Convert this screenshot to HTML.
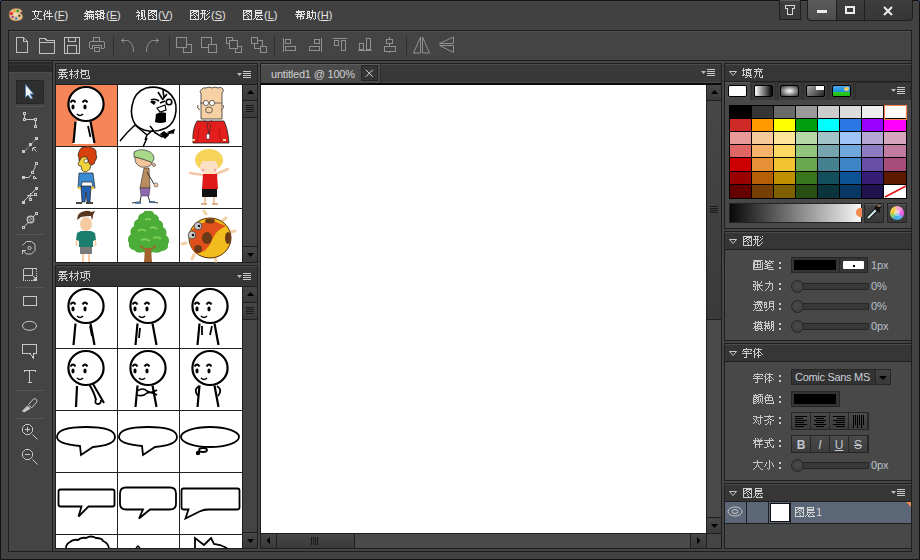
<!DOCTYPE html>
<html><head><meta charset="utf-8">
<style>
*{box-sizing:border-box}
html,body{margin:0;padding:0}
body{width:920px;height:560px;overflow:hidden;position:relative;background:#2c6cae;font-family:"Liberation Sans",sans-serif;font-size:12px;color:#d8d8d8}
.a{position:absolute}
#win{left:0;top:0;width:920px;height:560px;background:#414141;border:1px solid #121212;border-radius:2px 2px 0 0;box-shadow:inset 0 1px 0 #484848}
.menu{top:8px;font-size:11px;color:#e2e2e2;line-height:14px;white-space:nowrap}
.menu u{text-decoration:underline}
.bd{border:1px solid #1f1f1f}
.hdr{background:#363636;border-top:1px solid #4a4a4a}
.htxt{font-size:11px;color:#cfcfcf;line-height:14px;white-space:nowrap}
svg{position:absolute;overflow:visible}
.lbl{font-size:11px;color:#cdcdcd;line-height:14px;white-space:nowrap}
.val{font-size:11px;letter-spacing:-0.1px;color:#b8c0c8;line-height:14px;white-space:nowrap}
.ftab{width:25px;height:18px;background:#3c3c3c;border:1px solid #2e2e2e;border-bottom:none}
.sw{width:19px;height:12px;border:1px solid #000;border-radius:2px}
.ibtn{width:20px;height:20px;background:linear-gradient(#454545,#383838);border:1px solid #262626;box-shadow:inset 0 1px 0 #5a5a5a}
.abtn{width:18px;height:16px;background:linear-gradient(#4a4a4a,#3c3c3c)}
.sty{width:18px;text-align:center;font-size:12px;color:#c0c8d0;line-height:14px}
.sbtn{background:linear-gradient(#474747,#3a3a3a)}
</style></head><body>
<div id="win" class="a"></div>

<!-- title bar -->
<svg style="left:0;top:0" width="30" height="30">
 <path d="M9.2 15q-0.3-6 6-6.5q6-0.3 7 3.2l-2.2 1.2q2.5 0.8 2.8 3.5q0 4-6.5 4.5q-6.8 0.3-7.1-5.9z" fill="#e6c08e" stroke="#9c7040" stroke-width=".7"/>
 <circle cx="11.4" cy="13.6" r="1.5" fill="#d82020"/><circle cx="14.5" cy="11.2" r="1.1" fill="#f59a10"/><circle cx="17.8" cy="11" r="1.3" fill="#28a028"/>
 <circle cx="12.6" cy="17" r="1.2" fill="#a040a8"/><circle cx="16.2" cy="18.4" r="1.2" fill="#2090e0"/><circle cx="19.4" cy="15.8" r="1.1" fill="#3a3a3a"/>
 <circle cx="15.5" cy="14.5" r="1.8" fill="#f8dcb8"/>
</svg>
<div class="a menu" style="left:54px">(<u>F</u>)</div>
<div class="a menu" style="left:106px">(<u>E</u>)</div>
<div class="a menu" style="left:158px">(<u>V</u>)</div>
<div class="a menu" style="left:211px">(<u>S</u>)</div>
<div class="a menu" style="left:264px">(<u>L</u>)</div>
<div class="a menu" style="left:317px">(<u>H</u>)</div>

<!-- window buttons -->
<div class="a" style="left:779px;top:0;width:22px;height:20px;background:linear-gradient(#404040,#383838);border:1px solid #1e1e1e;border-top:none;box-shadow:inset 0 1px 0 #585858"></div>
<svg style="left:0;top:0" width="920" height="30" shape-rendering="crispEdges"><path d="M785.5 5.5h9v3h-2v6h-5v-6h-2z" fill="none" stroke="#d8d8d8" stroke-width="1"/></svg>
<div class="a" style="left:807px;top:0;width:106px;height:21px;background:#1e1e1e;border-radius:0 0 4px 4px"></div>
<div class="a" style="left:808px;top:0;width:28px;height:20px;background:linear-gradient(#5a5a5a,#4d4d4d);border-radius:0 0 0 3px"></div>
<div class="a" style="left:837px;top:0;width:27px;height:20px;background:linear-gradient(#3e3e3e,#363636)"></div>
<div class="a" style="left:865px;top:0;width:47px;height:20px;background:linear-gradient(#3e3e3e,#363636);border-radius:0 0 3px 0"></div>
<div class="a" style="left:817px;top:10px;width:10px;height:2.5px;background:#ececec"></div>
<div class="a" style="left:845px;top:6px;width:10px;height:8px;border:2px solid #ececec"></div>
<svg style="left:883px;top:6px" width="10" height="10"><path d="M1 1L9 9M9 1L1 9" stroke="#ececec" stroke-width="2"/></svg>

<!-- toolbar -->
<div class="a bd" style="left:8px;top:30px;width:904px;height:31px;background:#444;border-color:#1e1e1e"></div>
<div class="a" style="left:9px;top:31px;width:902px;height:1px;background:#515151"></div>
<svg id="tb" style="left:0;top:0" width="920" height="60" fill="none" stroke="#c0c0c0" stroke-width="1" shape-rendering="crispEdges">
 <!-- new -->
 <path d="M16.5 37.5h7l4 4v11h-11z M23.5 37.5v4h4"/>
 <!-- open -->
 <path d="M39.5 38.5h6l1 2h8v12.5h-15z M39.5 42.5h15"/>
 <!-- save -->
 <path d="M64.5 37.5h15v15.5h-15z M68.5 37.5v4h7v-4 M67.5 52.5v-7h9v7"/>
<g stroke="#909090"> <!-- print -->
 <g><path d="M93.5 41v-3.5h6v3.5 M90 41.5h14 M89.5 42v6 M104.5 42v6 M90 48.5h3 M101 48.5h3 M92.5 48v-2.5h9v2.5 M94.5 47.5h5v4h-5z"/></g>
 <path d="M113.5 36v19" stroke="#2e2e2e"/>
 <g shape-rendering="auto"><path d="M121.5 40.5h5c3 0 7 3 7 11.5 M121.5 40.5l2.5-2.5 M121.5 40.5l2.5 2.5"/><path d="M158.5 40.5h-5c-3 0-7 3-7 11.5 M158.5 40.5l-2.5-2.5 M158.5 40.5l-2.5 2.5"/></g>
 <path d="M169.5 36v19" stroke="#2e2e2e"/>
 <!-- arrange -->
 <path d="M183.5 44.5h8v8h-8z"/><path d="M176.5 37.5h10v10h-10z" fill="#444"/>
 <path d="M201.5 37.5h10v10h-10z"/><path d="M208.5 44.5h8v8h-8z" fill="#444"/>
 <path d="M226.5 37.5h6v6h-6z M235.5 46.5h6v6h-6z"/><path d="M229.5 40.5h8v8h-8z" fill="#444"/>
 <path d="M254.5 40.5h8v8h-8z"/><path d="M251.5 37.5h6v6h-6z M260.5 46.5h6v6h-6z" fill="#444"/>
 <path d="M274.5 36v19" stroke="#2e2e2e"/>
 <!-- align -->
 <path d="M283.5 38v14 M285.5 39.5h5v4h-5z M285.5 46.5h10v4h-10z"/>
 <path d="M321.5 38v14 M314.5 39.5h5v4h-5z M309.5 46.5h10v4h-10z"/>
 <path d="M333 38.5h14 M334.5 40.5h4v5h-4z M341.5 40.5h4v10h-4z"/>
 <path d="M358 50.5h14 M359.5 43.5h4v6h-4z M366.5 38.5h4v11h-4z"/>
 <path d="M389.5 37v2 M389.5 44v2 M389.5 51v2 M386.5 39.5h6v4h-6z M384.5 46.5h11v5h-11z"/>
 <path d="M406.5 36v19" stroke="#2e2e2e"/>
 <path d="M420.5 37v16h-7z M422.5 37v16h7z" shape-rendering="auto"/>
 <path d="M453.5 37v6.5h-14z M453.5 52.5v-7h-14z" shape-rendering="auto"/>
</g></svg>

<!-- main area -->
<div class="a bd" style="left:8px;top:60px;width:904px;height:492px;background:#454545;border-color:#1e1e1e"></div>
<!-- tools panel -->
<div class="a bd" style="left:8px;top:60px;width:45px;height:492px;background:#444"></div>
<div class="a" style="left:9px;top:61px;width:43px;height:11px;background:#2b2b2b;border-top:1px solid #474747"></div>
<div class="a" style="left:9px;top:62px;width:43px;height:1px;background:#232323"></div>
<div class="a" style="left:10px;top:64px;width:41px;height:1px;border-top:1px dotted #3c3c3c"></div>
<div class="a" style="left:9px;top:72px;width:43px;height:1px;background:#4d4d4d"></div>
<div class="a" style="left:16px;top:80px;width:28px;height:24px;background:#2f2f2f;border:1px solid #262626"></div>
<div class="a" style="left:16px;top:106px;width:28px;height:1px;background:#555"></div>
<div class="a" style="left:16px;top:234px;width:28px;height:1px;background:#555"></div>
<div class="a" style="left:16px;top:287px;width:28px;height:1px;background:#555"></div>
<div class="a" style="left:16px;top:390px;width:28px;height:1px;background:#555"></div>
<div class="a" style="left:16px;top:418px;width:28px;height:1px;background:#555"></div>
<svg id="tools" style="left:0;top:0" width="60" height="560" fill="none" stroke="#c8c8c8" stroke-width="1">
 <path d="M25.5 84.5v13l2.5-2.5 3 4 1.5-1-2.5-4h3.5z" fill="#f4f8fb" stroke="#4d7fb8" stroke-width=".9"/>
 <g shape-rendering="crispEdges">
  <path d="M23.5 112.5h2v2h-2z M23.5 118.5h2v2h-2z M34.5 118.5h2v2h-2z M34.5 125.5h2v2h-2z M24.5 115v3 M26 119.5h8 M35.5 121v4"/>
  <path d="M22 150h3v3h-3z M29 143h3v3h-3z M35 137h3v3h-3z" fill="#c8c8c8" stroke="none"/>
  <path d="M32.5 147.5h3 M32.5 147.5v3" />
  <path d="M22 176h3v3h-3z" fill="#c8c8c8" stroke="none"/>
  <path d="M31.5 171.5h2v2h-2z M35.5 162.5h2v2h-2z M33.5 178.5h3 M33.5 175.5v3"/>
    <path d="M22 201h3v3h-3z M35 187h3v3h-3z" fill="#c8c8c8" stroke="none"/>
  <path d="M34.5 193.5h2v2h-2z M29.5 198.5h2v2h-2z"/>
  <path d="M22.5 226.5h2v2h-2z M35.5 212.5h2v2h-2z"/>
  <path d="M23.5 268.5h13 M23.5 268.5v12 M23.5 275.5h9 M32.5 268.5v7"/>
  <path d="M36.5 271v5 M25 280.5h7" stroke-dasharray="1 1"/><path d="M36.5 268v2"/>
  <path d="M23.5 296.5h13v9h-13z"/>
  <path d="M22.5 344.5h14v9h-3.5v4l-3-4h-7.5z"/>
  <path d="M24 370.5h12 M24.5 371v1 M35.5 371v1 M29.5 371v11 M28 382.5h4"/>
 </g>
 <path d="M23.5 201.5l12-12" shape-rendering="auto" stroke-width="1"/>
 <path d="M24.5 151.5l11-12" shape-rendering="auto" stroke-dasharray="1.2 .8"/>
 <path d="M33 148l3.5 3.5" shape-rendering="auto"/>
 <path d="M25 177.5h4l2-2.5 M33 171l2-3v-3" shape-rendering="auto"/>
 <path d="M34 176l3 3" shape-rendering="auto"/>
 <path d="M30.5 193l-.5 5 M27 195.5h6.5" shape-rendering="auto"/>
 <path d="M24 227l12-13" shape-rendering="auto"/>
 <circle cx="30.5" cy="219.5" r="3.3" fill="#444" stroke-width="1.2"/><path d="M28 218.5l4 4 M29.5 217l3.5 3.5" stroke-width="1"/>
 <path d="M22.5 245.5l4-4h5l3.5 3v6l-3.5 3.5h-5l-4-4" shape-rendering="auto"/>
 <path d="M22.5 250v3.5 M22.5 250.5h3.5" shape-rendering="crispEdges"/>
 <circle cx="29.5" cy="248" r="1.6" stroke-width="1"/>
 <path d="M32.5 275.5l2.5 2.5" shape-rendering="auto"/><path d="M37 276v5h-5z" fill="#c8c8c8" stroke="none"/>
 <ellipse cx="29.5" cy="325.8" rx="7" ry="4.5"/>
 <path d="M28.5 404.5l5-5.5q1.5-1 3 0.5q1 1.5 0 3l-5 5.5z" shape-rendering="auto"/>
 <path d="M22.5 411l5-5 2.5 2.5-6 3.5z" fill="#c8c8c8" stroke="#c8c8c8" stroke-width="1"/>
 <path d="M25.5 424.5h4l3 3v4l-3 3h-4l-3-3v-4z M32.5 434.5l5 5 M25 429.5h5 M27.5 427v5" shape-rendering="auto"/>
 <path d="M25.5 449.5h4l3 3v4l-3 3h-4l-3-3v-4z M32.5 459.5l5 5 M25 454.5h5" shape-rendering="auto"/>
</svg>

<!-- left panel 1: 素材包 -->
<div class="a bd" style="left:55px;top:63px;width:203px;height:200px;background:#414141"></div>
<div class="a hdr" style="left:56px;top:64px;width:201px;height:20px"></div>
<div class="a" style="left:56px;top:84px;width:201px;height:1px;background:#1f1f1f"></div>
<div class="a" style="left:56px;top:85px;width:186px;height:177px;background:#ffffff"></div>

<!-- left panel 2: 素材项 -->
<div class="a bd" style="left:55px;top:265px;width:203px;height:284px;background:#414141"></div>
<div class="a hdr" style="left:56px;top:266px;width:201px;height:20px"></div>
<div class="a" style="left:56px;top:286px;width:201px;height:1px;background:#1f1f1f"></div>
<div class="a" style="left:56px;top:287px;width:186px;height:261px;background:#ffffff"></div>


<!-- grids -->
<svg style="left:0;top:0" width="260" height="560">
 
 <rect x="56" y="85" width="186" height="177" fill="#fff"/>
 <rect x="56" y="85" width="61" height="61" fill="#f68657"/>
 <path d="M117.5 85v177 M179.5 85v177 M56 146.5h186 M56 208.5h186" stroke="#222" stroke-width="1"/>
 <!-- cell 1 -->
 <path d="M75 121l-2 23h21l-4-23z" fill="#fff"/>
 <g transform="translate(86 104)"><ellipse cx="0" cy="0" rx="17.6" ry="17" fill="#fff" stroke="#000" stroke-width="2.2"/>
   <path d="M-15.5 -1.5q2.5-4 5 0 M-3.5 -1.5q2.5-4 5 0" stroke="#000" stroke-width="2" fill="none"/>
   <ellipse cx="-13" cy="3" rx="1.6" ry="2.4" fill="#000"/><ellipse cx="-1" cy="3" rx="1.6" ry="2.4" fill="#000"/>
   <path d="M-9 10q3 3 6 0" stroke="#000" stroke-width="1.6" fill="none"/></g><g transform="translate(86 104)"><path d="M-10.5 17.5l-2 21.5 M4.5 17.5l4 21.5" stroke="#000" stroke-width="2.2" fill="none"/></g>
 <path d="M88 126l2.5 11" stroke="#000" stroke-width="1.8"/>
 <!-- rage face -->
 <path d="M135 124q-5-8-3-18q2-14 14-18q12-3 22 4q9 7 8 19q-1 12-10 17q-8 4-17 3q-9-1-14-7z" fill="#fff" stroke="#000" stroke-width="1.6"/>
 <path d="M158 92l5 8 M163 90l1 8 M167 94l-4 5 M151 100q4-2 8 1 M160 103l5-2" stroke="#000" stroke-width="1.6" fill="none"/>
 <circle cx="169" cy="102" r="2.8" fill="none" stroke="#000" stroke-width="1.6"/>
 <path d="M150 102q3-3 6 0l-2 3z" fill="#000"/>
 <path d="M157 108l8 -3 1 5-6 2z" fill="#fff" stroke="#000" stroke-width="1.2"/>
 <path d="M156 114q5-3 10-1l0 9q-6 2-11 0z" fill="#000"/>
 <path d="M120 141q7-9 15-16 M135 125l12 10 6-5 M147 135l-2 5 M150 126l4 5 M154 132l8 5 10-5 M143 147l4-9" stroke="#000" stroke-width="1.5" fill="none"/>
 <path d="M161 134l3-2 4 3-3 3z M169 132l5-2-1 3z" fill="#000" stroke="#000" stroke-width="1.5"/>
 <!-- dilbert -->
 <path d="M197 121q-5 8-4 22h36q-1-14-5-22z" fill="#e41d1d" stroke="#222" stroke-width=".8"/>
 <path d="M201 90q2-3 5-2q3-2 6 0q3-2 6 0q3-2 5 1q1 3-1 4l0 26h-21l0-26q-2-1 0-3z" fill="#f7d1a6" stroke="#333" stroke-width=".8"/>
 <path d="M198 105q-2 3 2 5 M223 105q2 3-2 5" fill="#f7d1a6" stroke="#333" stroke-width=".8"/>
 <circle cx="206" cy="103" r="2.6" fill="#fff" stroke="#333" stroke-width=".7"/><circle cx="212" cy="103" r="2.6" fill="#fff" stroke="#333" stroke-width=".7"/>
 <path d="M200 103h3.4 M214.6 103h7" stroke="#333" stroke-width=".7"/>
 <ellipse cx="209" cy="110" rx="3.5" ry="3" fill="#f7d1a6" stroke="#333" stroke-width=".7"/>
 <path d="M204 120l4 4 4-4 M207 124l2 11 M211 124l-2 11" stroke="#333" stroke-width=".7" fill="none"/><rect x="206.5" y="134" width="3" height="5" fill="#fff" stroke="#333" stroke-width=".5"/>
 <path d="M199 128l-2 15 M219 128l2 15" stroke="#a01010" stroke-width=".7"/>
 <path d="M192 140h3 M223 140h3" stroke="#f7d1a6" stroke-width="2"/>
 <!-- red hair guy -->
 <path d="M79 152q1-5 6-5q4-2 7 1q5 1 4 6q2 4-1 7q0 3-3 4l-10-1q-4-3-3-6q-2-3 0-6z" fill="#d8400e" stroke="#222" stroke-width=".7"/>
 <path d="M81 158q2-2 6-1l2 6q3 2 1 6l-4 3q-3 0-4-2l-1-4q-3 0-3-2z" fill="#f2d23a" stroke="#222" stroke-width=".7"/>
 <circle cx="86" cy="161" r="2" fill="#fff" stroke="#222" stroke-width=".6"/>
 <path d="M79 173h14l2 15h-2l-1-6h-10l-1 6h-3z" fill="#3a8bd2" stroke="#222" stroke-width=".7"/>
 <path d="M78 188h3M91 188h3" stroke="#f2d23a" stroke-width="2.5"/>
 <path d="M81 186h10l-1 16h-3l-1-10-1 10h-3z" fill="#2461b0" stroke="#222" stroke-width=".7"/>
 <path d="M76 203h6 M86 203h7" stroke="#444" stroke-width="2"/>
 <!-- green hair guy -->
 <path d="M134 152q6-4 14-1q6 2 6 8l-2 4q-8-4-18-6z" fill="#a8d88a" stroke="#333" stroke-width=".7"/>
 <path d="M135 157q-1 7 6 10q7 1 11-3l-1-2q-8-3-16-5z" fill="#f2c59a" stroke="#333" stroke-width=".7"/>
 <circle cx="154" cy="165" r="1.5" fill="#f2c59a" stroke="#333" stroke-width=".6"/>
 <path d="M144 168l-4 20h10l-1-20z" fill="#b98b5e" stroke="#333" stroke-width=".6"/>
 <path d="M140 188h10l-1 8h-8z" fill="#8e68b0" stroke="#333" stroke-width=".5"/>
 <path d="M141 196l-1 6 M148 196l2 6 M132 203q4-1 9-1 M149 202q5 0 9 1 M147 172l7 12" stroke="#333" stroke-width="1" fill="none"/>
 <path d="M135 203h6 M149 202h6" stroke="#2a6aa0" stroke-width="1.5"/>
 <circle cx="156" cy="185" r="2" fill="#f2c59a" stroke="#333" stroke-width=".5"/>
 <!-- blonde kid -->
 <ellipse cx="209" cy="160" rx="14" ry="11" fill="#f7d35a"/>
 <ellipse cx="209" cy="167" rx="9" ry="8" fill="#fbe0c4"/>
 <path d="M197 158q5-4 12-3q7-1 12 3v3h-24z" fill="#f7d35a"/>
 <circle cx="203" cy="170" r="1.2" fill="#f4a0a8"/><circle cx="215" cy="170" r="1.2" fill="#f4a0a8"/>
 <path d="M190 173l13 2 M228 169l-12 5" stroke="#f4c8a8" stroke-width="2.5" stroke-linecap="round"/>
 <path d="M203 174h14l1 15h-16z" fill="#e11818"/>
 <rect x="202" y="189" width="15" height="8" fill="#111"/>
 <path d="M205 197v7 M214 197v7" stroke="#f2c9a5" stroke-width="2.2"/>
 <path d="M201 204h6 M212 204h6" stroke="#d09a70" stroke-width="1.5"/>
 <!-- boy teal -->
 <ellipse cx="86" cy="224" rx="6" ry="7" fill="#f5caa0"/>
 <path d="M77 220q0-8 8-9q4-1 6 1l4-1-2 4q0 3-1 5l-1-4q-5 0-10 1z" fill="#5a3620"/>
 <path d="M77 233l4-2h10l4 2 1 7-3 1v6h-14v-6l-3-1z" fill="#1b7d6b"/>
 <path d="M77 240l-1 4 2 2 M95 240l1 4-2 2" stroke="#f5caa0" stroke-width="1.5" fill="none"/>
 <rect x="80" y="247" width="12" height="7" fill="#7a7a7a"/>
 <path d="M83 254v8 M89 254v8" stroke="#f5caa0" stroke-width="2"/>
 <!-- tree -->
 <path d="M148 211q5-1 6 3q5 1 5 6q5 2 4 7q5 3 3 8q5 4 2 9q1 6-6 7q-4 3-9 1q-5 3-10 0q-6 2-9-2q-6-1-5-7q-3-5 2-9q-2-5 3-8q-1-5 4-7q0-5 5-6q1-3 5-2z" fill="#4bac37"/>
 <path d="M138 231q4-3 8 0 M150 228q4-2 7 1 M141 240q5-2 9 1 M153 238q5-2 8 1 M145 220q3-2 6 0" stroke="#7ed054" stroke-width="2" fill="none"/>
 <path d="M145 249l-5-3 M151 249l5-3" stroke="#a2622e" stroke-width="1.5"/>
 <path d="M145 248h6l1 14h-8z" fill="#a2622e"/>
 <!-- ladybug -->
 <path d="M206 214l-2-3 M186 243l-4 1 M230 232l5-1 M222 221l4-3 M194 255l-2 4 M215 258l1 3" stroke="#f4d0a8" stroke-width="3" stroke-linecap="round"/>
 <ellipse cx="210" cy="238" rx="21" ry="20" fill="#f2bd1c" stroke="#5a3010" stroke-width="1"/>
 <path d="M192 230q8-10 24-8l10 4q-10 4-14 14q-4 12-16 14q-6-6-6-14z" fill="#e0501a"/>
 <ellipse cx="207" cy="238" rx="5" ry="6" fill="#6b3a16"/><ellipse cx="228" cy="238" rx="3" ry="6" fill="#6b3a16"/><ellipse cx="198" cy="249" rx="4" ry="4" fill="#6b3a16"/><ellipse cx="210" cy="221" rx="5" ry="2.5" fill="#6b3a16"/>
 <circle cx="198" cy="226" r="3.8" fill="#ccc" stroke="#444" stroke-width=".8"/><circle cx="192" cy="235" r="3.8" fill="#ccc" stroke="#444" stroke-width=".8"/>
 <circle cx="199" cy="226" r="1.3" fill="#111"/><circle cx="193" cy="235" r="1.3" fill="#111"/>

 <!-- 素材项 grid -->
 <rect x="56" y="287" width="186" height="261" fill="#fff"/>
 <path d="M117.5 287v261 M179.5 287v261 M56 348.5h186 M56 410.5h186 M56 472.5h186 M56 534.5h186" stroke="#222" stroke-width="1"/>
 <g transform="translate(86 306)"><ellipse cx="0" cy="0" rx="17.6" ry="17" fill="#fff" stroke="#000" stroke-width="2.2"/>
   <path d="M-15.5 -1.5q2.5-4 5 0 M-3.5 -1.5q2.5-4 5 0" stroke="#000" stroke-width="2" fill="none"/>
   <ellipse cx="-13" cy="3" rx="1.6" ry="2.4" fill="#000"/><ellipse cx="-1" cy="3" rx="1.6" ry="2.4" fill="#000"/>
   <path d="M-9 10q3 3 6 0" stroke="#000" stroke-width="1.6" fill="none"/></g><g transform="translate(86 306)"><path d="M-10.5 17.5l-2 21.5 M4.5 17.5l4 21.5" stroke="#000" stroke-width="2.2" fill="none"/></g><path d="M90 326l2 10" stroke="#000" stroke-width="1.8"/>
 <g transform="translate(148 306)"><ellipse cx="0" cy="0" rx="17.6" ry="17" fill="#fff" stroke="#000" stroke-width="2.2"/>
   <path d="M-15.5 -1.5q2.5-4 5 0 M-3.5 -1.5q2.5-4 5 0" stroke="#000" stroke-width="2" fill="none"/>
   <ellipse cx="-13" cy="3" rx="1.6" ry="2.4" fill="#000"/><ellipse cx="-1" cy="3" rx="1.6" ry="2.4" fill="#000"/>
   <path d="M-9 10q3 3 6 0" stroke="#000" stroke-width="1.6" fill="none"/></g><g transform="translate(148 306)"><path d="M-10.5 17.5l-2 21.5 M4.5 17.5l4 21.5" stroke="#000" stroke-width="2.2" fill="none"/></g><path d="M140 328l-1 10" stroke="#000" stroke-width="1.8"/>
 <g transform="translate(210 306)"><ellipse cx="0" cy="0" rx="17.6" ry="17" fill="#fff" stroke="#000" stroke-width="2.2"/>
   <path d="M-15.5 -1.5q2.5-4 5 0 M-3.5 -1.5q2.5-4 5 0" stroke="#000" stroke-width="2" fill="none"/>
   <ellipse cx="-13" cy="3" rx="1.6" ry="2.4" fill="#000"/><ellipse cx="-1" cy="3" rx="1.6" ry="2.4" fill="#000"/>
   <path d="M-9 10q3 3 6 0" stroke="#000" stroke-width="1.6" fill="none"/></g><g transform="translate(210 306)"><path d="M-10.5 17.5l-2 21.5 M4.5 17.5l4 21.5" stroke="#000" stroke-width="2.2" fill="none"/></g><path d="M202 326l0 9 M212 326l-2 9" stroke="#000" stroke-width="1.8"/>
 <g transform="translate(86 368)"><ellipse cx="0" cy="0" rx="17.6" ry="17" fill="#fff" stroke="#000" stroke-width="2.2"/>
   <path d="M-15.5 -1.5q2.5-4 5 0 M-3.5 -1.5q2.5-4 5 0" stroke="#000" stroke-width="2" fill="none"/>
   <ellipse cx="-13" cy="3" rx="1.6" ry="2.4" fill="#000"/><ellipse cx="-1" cy="3" rx="1.6" ry="2.4" fill="#000"/>
   <path d="M-9 10q3 3 6 0" stroke="#000" stroke-width="1.6" fill="none"/></g><path d="M77 386l-1 21" stroke="#000" stroke-width="2.2"/><path d="M89.5 385q5 8 6.5 15 M93 384l11 19" stroke="#000" stroke-width="2" fill="none"/><path d="M96 399q-2 5 2 5q3 0 3-4" stroke="#000" stroke-width="1.8" fill="none"/>
 <g transform="translate(148 368)"><ellipse cx="0" cy="0" rx="17.6" ry="17" fill="#fff" stroke="#000" stroke-width="2.2"/>
   <path d="M-15.5 -1.5q2.5-4 5 0 M-3.5 -1.5q2.5-4 5 0" stroke="#000" stroke-width="2" fill="none"/>
   <ellipse cx="-13" cy="3" rx="1.6" ry="2.4" fill="#000"/><ellipse cx="-1" cy="3" rx="1.6" ry="2.4" fill="#000"/>
   <path d="M-9 10q3 3 6 0" stroke="#000" stroke-width="1.6" fill="none"/></g><g transform="translate(148 368)"><path d="M-10.5 17.5l-2 21.5 M4.5 17.5l4 21.5" stroke="#000" stroke-width="2.2" fill="none"/></g><path d="M137 391q6-4 10 0q4 3 10-1 M137 395q6 2 10-2q4-2 10 2" stroke="#000" stroke-width="1.6" fill="none"/>
 <g transform="translate(210 368)"><ellipse cx="0" cy="0" rx="17.6" ry="17" fill="#fff" stroke="#000" stroke-width="2.2"/>
   <path d="M-15.5 -1.5q2.5-4 5 0 M-3.5 -1.5q2.5-4 5 0" stroke="#000" stroke-width="2" fill="none"/>
   <ellipse cx="-13" cy="3" rx="1.6" ry="2.4" fill="#000"/><ellipse cx="-1" cy="3" rx="1.6" ry="2.4" fill="#000"/>
   <path d="M-9 10q3 3 6 0" stroke="#000" stroke-width="1.6" fill="none"/></g><g transform="translate(210 368)"><path d="M-10.5 17.5l-2 21.5 M4.5 17.5l4 21.5" stroke="#000" stroke-width="2.2" fill="none"/></g><path d="M199 386q-6 4-1 10 M217 386q6 4 1 10" stroke="#000" stroke-width="1.8" fill="none"/>
 <g fill="#fff" stroke="#000" stroke-width="1.8">
  <path d="M80 446q-23-2-23-9q0-10 29-10t29 10q0 8-22 10l-12 8z"/>
  <path d="M142 446q-23-2-23-9q0-10 29-10t29 10q0 8-22 10l-12 8z"/>
  <ellipse cx="210" cy="437" rx="29" ry="10"/>
  <ellipse cx="203" cy="450" rx="4" ry="2"/><circle cx="198" cy="453" r="1.3" fill="#000"/>
  <path d="M59.5 489.5h53q2 0 2 2v13q0 2-2 2h-24l-10 10 3-10h-21q-2 0-2-2v-13q0-2 2-2z"/>
  <path d="M126 487.5h44q6 0 6 6v10q0 6-6 6h-20l-11 9 4-9h-17q-6 0-6-6v-10q0-6 6-6z"/>
  <path d="M183.5 488.5h54q2 0 2 2v17q0 2-2 2h-29q-5 0-9 2l-14 7 3-9h-5q-2 0-2-2v-17q0-2 2-2z"/>
 </g>
 <path d="M66 548q0-4 4-6q3-3 8-2q3-3 8-2q5-3 10 0q6 0 7 3q5 2 6 7" fill="none" stroke="#000" stroke-width="1.8"/>
 <path d="M136 548l2-2 2 2" fill="none" stroke="#000" stroke-width="1.5"/>
 <path d="M195 548v-10l9 7 7-7 3 6 6 1 7 3" fill="none" stroke="#000" stroke-width="1.8"/>
</svg>


<!-- scrollbars left panels -->
<div class="a" style="left:242px;top:85px;width:15px;height:177px;background:#444;border-left:1px solid #1f1f1f"></div>
<div class="a sbtn" style="left:243px;top:85px;width:14px;height:15px"></div>
<div class="a sbtn" style="left:243px;top:101px;width:14px;height:17px"></div>
<div class="a sbtn" style="left:243px;top:247px;width:14px;height:15px"></div>
<div class="a" style="left:243px;top:100px;width:14px;height:1px;background:#1f1f1f"></div>
<div class="a" style="left:243px;top:117px;width:14px;height:1px;background:#1f1f1f"></div>
<div class="a" style="left:243px;top:246px;width:14px;height:1px;background:#1f1f1f"></div>
<div class="a" style="left:242px;top:287px;width:15px;height:261px;background:#444;border-left:1px solid #1f1f1f"></div>
<div class="a sbtn" style="left:243px;top:287px;width:14px;height:15px"></div>
<div class="a sbtn" style="left:243px;top:303px;width:14px;height:17px"></div>
<div class="a sbtn" style="left:243px;top:533px;width:14px;height:15px"></div>
<div class="a" style="left:243px;top:302px;width:14px;height:1px;background:#1f1f1f"></div>
<div class="a" style="left:243px;top:319px;width:14px;height:1px;background:#1f1f1f"></div>
<div class="a" style="left:243px;top:532px;width:14px;height:1px;background:#1f1f1f"></div>
<svg style="left:0;top:0" width="260" height="560">
 <path d="M247 94h7l-3.5-4z M247 253h7l-3.5 4z M247 296h7l-3.5-4z M247 539h7l-3.5 4z" fill="#000"/>
 <path d="M246 105.5h8 M246 107.5h8 M246 109.5h8 M246 111.5h8 M246 307.5h8 M246 309.5h8 M246 311.5h8 M246 313.5h8" stroke="#1a1a1a" stroke-width="1"/>
 <path d="M237 73h5l-2.5 3z M237 275h5l-2.5 3z" fill="#bbb"/>
 <path d="M243 71.5h8 M243 73.5h8 M243 75.5h8 M243 77.5h8 M243 273.5h8 M243 275.5h8 M243 277.5h8 M243 279.5h8" stroke="#c8c8c8" stroke-width="1"/>
</svg>

<!-- canvas panel -->
<div class="a bd" style="left:260px;top:63px;width:462px;height:486px;background:#3a3a3a"></div>
<div class="a" style="left:261px;top:64px;width:119px;height:19px;background:#4a4a4a;border-top:1px solid #5e5e5e"></div>
<div class="a" style="left:271px;top:67px;font-size:11px;color:#d0d0d0;white-space:nowrap;line-height:14px;letter-spacing:-0.2px">untitled1 @ 100%</div>
<div class="a" style="left:361px;top:65px;width:17px;height:16px;background:#363636;border:1px solid #262626"></div>
<svg style="left:365px;top:69px" width="9" height="9"><path d="M0.8 0.8l7 7M7.8 0.8l-7 7" stroke="#d8d8d8" stroke-width="1"/></svg>
<div class="a" style="left:261px;top:83px;width:460px;height:2px;background:#0a0a0a"></div>
<div class="a" style="left:261px;top:85px;width:446px;height:449px;background:#ffffff"></div>


<div class="a" style="left:380px;top:64px;width:341px;height:19px;background:#2c2c2c"></div>
<div class="a" style="left:381px;top:64px;width:340px;height:19px;background:#393939;border-top:1px solid #4a4a4a;border-bottom:1px solid #4a4a4a"></div>
<svg style="left:0;top:0" width="920" height="560">
 <path d="M701 71h5l-2.5 3z" fill="#bbb"/>
 <path d="M707 69.5h8 M707 71.5h8 M707 73.5h8 M707 75.5h8" stroke="#c8c8c8" stroke-width="1"/>
</svg>
<!-- canvas v scrollbar -->
<div class="a" style="left:706px;top:85px;width:15px;height:448px;background:#4a4a4a;border-left:1px solid #1f1f1f"></div>
<div class="a sbtn" style="left:707px;top:85px;width:14px;height:15px"></div>
<div class="a sbtn" style="left:707px;top:101px;width:14px;height:218px"></div>
<div class="a sbtn" style="left:707px;top:518px;width:14px;height:15px"></div>
<div class="a" style="left:707px;top:100px;width:14px;height:1px;background:#1f1f1f"></div>
<div class="a" style="left:707px;top:319px;width:14px;height:1px;background:#1f1f1f"></div>
<div class="a" style="left:707px;top:517px;width:14px;height:1px;background:#1f1f1f"></div>
<!-- canvas h scrollbar -->
<div class="a" style="left:261px;top:533px;width:446px;height:15px;background:#4a4a4a;border-top:1px solid #1f1f1f"></div>
<div class="a sbtn" style="left:261px;top:534px;width:15px;height:14px"></div>
<div class="a sbtn" style="left:277px;top:534px;width:77px;height:14px"></div>
<div class="a sbtn" style="left:691px;top:534px;width:15px;height:14px"></div>
<div class="a" style="left:276px;top:534px;width:1px;height:14px;background:#1f1f1f"></div>
<div class="a" style="left:354px;top:534px;width:1px;height:14px;background:#1f1f1f"></div>
<div class="a" style="left:690px;top:534px;width:1px;height:14px;background:#1f1f1f"></div>
<div class="a" style="left:706px;top:533px;width:15px;height:15px;background:#444;border-left:1px solid #1f1f1f;border-top:1px solid #1f1f1f"></div>
<svg style="left:0;top:0" width="920" height="560">
 <path d="M711 94h7l-3.5-4z M711 524h7l-3.5 4z M270 537v7l-3.5-3.5z M697 537v7l3.5-3.5z" fill="#000"/>
 <path d="M710 206.5h8 M710 208.5h8 M710 210.5h8 M710 212.5h8 M311.5 537v8 M313.5 537v8 M315.5 537v8 M317.5 537v8" stroke="#1a1a1a" stroke-width="1"/>
</svg>

<!-- right panels -->
<div class="a bd" style="left:724px;top:63px;width:188px;height:166px;background:#484848"></div>
<div class="a hdr" style="left:725px;top:64px;width:186px;height:17px"></div>
<div class="a" style="left:725px;top:81px;width:186px;height:1px;background:#1f1f1f"></div>
<svg style="left:0;top:0" width="920" height="560"><path d="M729.5 71.5h7l-3.5 4z" fill="none" stroke="#c8c8c8" stroke-width="1"/></svg>
<div class="a" style="left:725px;top:82px;width:186px;height:18px;background:#3a3a3a"></div>
<div class="a" style="left:725px;top:82px;width:25px;height:19px;background:#4a4a4a;border-top:1px solid #5c5c5c"></div>
<div class="a ftab" style="left:751px;top:82px"></div>
<div class="a ftab" style="left:777px;top:82px"></div>
<div class="a ftab" style="left:803px;top:82px"></div>
<div class="a ftab" style="left:829px;top:82px"></div>
<div class="a" style="left:855px;top:82px;width:56px;height:18px;background:#383838;border:1px solid #2e2e2e;border-bottom:none"></div>
<div class="a sw" style="left:728px;top:85px;background:#fff"></div>
<div class="a sw" style="left:754px;top:85px;background:linear-gradient(90deg,#fff,#000)"></div>
<div class="a sw" style="left:780px;top:85px;background:radial-gradient(ellipse at 50% 50%,#fff,#555 80%,#333)"></div>
<div class="a sw" style="left:806px;top:85px;background:linear-gradient(135deg,#aaa,#222)"><div class="a" style="left:9px;top:0;width:8px;height:4px;background:#fff"></div></div>
<div class="a sw" style="left:832px;top:85px;background:linear-gradient(#4aa8e8 0,#1e90e0 55%,#33cc22 60%,#22bb11)"><div class="a" style="left:11px;top:1px;width:5px;height:4px;border-radius:50%;background:#f5d060"></div></div>
<svg style="left:0;top:0" width="920" height="560"><path d="M891 89h5l-2.5 3z" fill="#bbb"/><path d="M897 87.5h8 M897 89.5h8 M897 91.5h8 M897 93.5h8" stroke="#c8c8c8" stroke-width="1"/></svg>
<svg style="left:0;top:0" width="920" height="560">
 <rect x="729" y="105" width="178" height="94" fill="#000"/>
 <rect x="730" y="106" width="21" height="12" fill="#000000"/>
 <rect x="752" y="106" width="21" height="12" fill="#353535"/>
 <rect x="774" y="106" width="21" height="12" fill="#6a6a6a"/>
 <rect x="796" y="106" width="21" height="12" fill="#9a9a9a"/>
 <rect x="818" y="106" width="21" height="12" fill="#cccccc"/>
 <rect x="840" y="106" width="21" height="12" fill="#dcdcdc"/>
 <rect x="862" y="106" width="21" height="12" fill="#eeeeee"/>
 <rect x="884" y="106" width="22" height="12" fill="#ffffff"/>
 <rect x="730" y="119" width="21" height="12" fill="#cf2a27"/>
 <rect x="752" y="119" width="21" height="12" fill="#ff9900"/>
 <rect x="774" y="119" width="21" height="12" fill="#ffff00"/>
 <rect x="796" y="119" width="21" height="12" fill="#009e0f"/>
 <rect x="818" y="119" width="21" height="12" fill="#00ffff"/>
 <rect x="840" y="119" width="21" height="12" fill="#2b78e4"/>
 <rect x="862" y="119" width="21" height="12" fill="#9900ff"/>
 <rect x="884" y="119" width="22" height="12" fill="#ff00ff"/>
 <rect x="730" y="132" width="21" height="12" fill="#ea9999"/>
 <rect x="752" y="132" width="21" height="12" fill="#f9cb9c"/>
 <rect x="774" y="132" width="21" height="12" fill="#ffe599"/>
 <rect x="796" y="132" width="21" height="12" fill="#b6d7a8"/>
 <rect x="818" y="132" width="21" height="12" fill="#a2c4c9"/>
 <rect x="840" y="132" width="21" height="12" fill="#9fc5f8"/>
 <rect x="862" y="132" width="21" height="12" fill="#b4a7d6"/>
 <rect x="884" y="132" width="22" height="12" fill="#d5a6bd"/>
 <rect x="730" y="145" width="21" height="12" fill="#e06666"/>
 <rect x="752" y="145" width="21" height="12" fill="#f6b26b"/>
 <rect x="774" y="145" width="21" height="12" fill="#ffd966"/>
 <rect x="796" y="145" width="21" height="12" fill="#93c47d"/>
 <rect x="818" y="145" width="21" height="12" fill="#76a5af"/>
 <rect x="840" y="145" width="21" height="12" fill="#6fa8dc"/>
 <rect x="862" y="145" width="21" height="12" fill="#8e7cc3"/>
 <rect x="884" y="145" width="22" height="12" fill="#c27ba0"/>
 <rect x="730" y="158" width="21" height="13" fill="#cc0000"/>
 <rect x="752" y="158" width="21" height="13" fill="#e69138"/>
 <rect x="774" y="158" width="21" height="13" fill="#f1c232"/>
 <rect x="796" y="158" width="21" height="13" fill="#6aa84f"/>
 <rect x="818" y="158" width="21" height="13" fill="#45818e"/>
 <rect x="840" y="158" width="21" height="13" fill="#3d85c6"/>
 <rect x="862" y="158" width="21" height="13" fill="#674ea7"/>
 <rect x="884" y="158" width="22" height="13" fill="#a64d79"/>
 <rect x="730" y="172" width="21" height="12" fill="#990000"/>
 <rect x="752" y="172" width="21" height="12" fill="#b45f06"/>
 <rect x="774" y="172" width="21" height="12" fill="#bf9000"/>
 <rect x="796" y="172" width="21" height="12" fill="#38761d"/>
 <rect x="818" y="172" width="21" height="12" fill="#134f5c"/>
 <rect x="840" y="172" width="21" height="12" fill="#0b5394"/>
 <rect x="862" y="172" width="21" height="12" fill="#351c75"/>
 <rect x="884" y="172" width="22" height="12" fill="#5b1a00"/>
 <rect x="730" y="185" width="21" height="13" fill="#660000"/>
 <rect x="752" y="185" width="21" height="13" fill="#783f04"/>
 <rect x="774" y="185" width="21" height="13" fill="#7f6000"/>
 <rect x="796" y="185" width="21" height="13" fill="#274e13"/>
 <rect x="818" y="185" width="21" height="13" fill="#0c343d"/>
 <rect x="840" y="185" width="21" height="13" fill="#073763"/>
 <rect x="862" y="185" width="21" height="13" fill="#20124d"/>
 <rect x="884" y="185" width="22" height="13" fill="#ffffff"/>
 <path d="M884.5 105.5h22v14h-22z" fill="none" stroke="#f0844c" stroke-width="1.2"/>
 <rect x="886" y="107" width="19" height="10" fill="#fff"/>
 <path d="M885 197l21-11" stroke="#e01010" stroke-width="1.5"/>
</svg>
<div class="a" style="left:729px;top:203px;width:133px;height:20px;background:#111;border:1px solid #222"></div>
<div class="a" style="left:730px;top:204px;width:131px;height:18px;background:linear-gradient(90deg,#080808,#f8f8f8)"></div>
<div class="a" style="left:856px;top:208px;width:6px;height:9px;background:#f08a50;border-radius:5px 0 0 5px"></div>
<div class="a ibtn" style="left:864px;top:203px"></div>
<div class="a ibtn" style="left:887px;top:203px"></div>
<div class="a" style="left:890px;top:206px;width:14px;height:14px;border-radius:50%;background:conic-gradient(from 0deg,#f8a8c8 0deg,#f0a0d8 40deg,#e860e8 80deg,#e060e0 110deg,#50b8f0 140deg,#40a8e8 200deg,#80d080 230deg,#a0d060 250deg,#f0c840 280deg,#f8d050 330deg,#f8a8c8 360deg)"></div>
<div class="a" style="left:894px;top:210px;width:6px;height:6px;border-radius:50%;background:rgba(255,255,255,.45)"></div>
<svg style="left:0;top:0" width="920" height="560">
 <path d="M868.5 217.5l8-8" stroke="#111" stroke-width="4.2" stroke-linecap="round"/><path d="M868.5 217.5l8-8" stroke="#cfe8f0" stroke-width="2.2" stroke-linecap="round"/>
 <path d="M875 207l5 5" stroke="#111" stroke-width="2.5"/><path d="M877 209l3-3" stroke="#111" stroke-width="3.5" stroke-linecap="round"/><path d="M878 206.5q1.5-1.5 3-0.5" stroke="#c49a6c" stroke-width="1.2" fill="none"/>
</svg>
<div class="a bd" style="left:724px;top:231px;width:188px;height:110px;background:#484848"></div>
<div class="a hdr" style="left:725px;top:232px;width:186px;height:17px"></div>
<div class="a" style="left:725px;top:249px;width:186px;height:1px;background:#1f1f1f"></div>
<svg style="left:0;top:0" width="920" height="560"><path d="M729.5 239.5h7l-3.5 4z" fill="none" stroke="#c8c8c8" stroke-width="1"/></svg>
<div class="a" style="left:791px;top:257px;width:49px;height:16px;background:#353535;border:1px solid #262626"></div>
<div class="a" style="left:794px;top:260px;width:42px;height:10px;background:#000"></div>
<div class="a" style="left:839px;top:257px;width:29px;height:16px;background:#353535;border:1px solid #262626"></div>
<div class="a" style="left:843px;top:261px;width:21px;height:8px;background:#fff;border-radius:1px"></div>
<div class="a" style="left:853px;top:265px;width:2px;height:2px;background:#000"></div>
<div class="a val" style="left:871px;top:258px">1px</div>
<div class="a" style="left:798px;top:283px;width:71px;height:7px;background:#383838;border:1px solid #262626;border-radius:1px"></div>
<div class="a" style="left:791px;top:280px;width:13px;height:13px;border-radius:50%;background:radial-gradient(circle at 50% 40%,#4a4a4a,#3a3a3a);border:1px solid #242424"></div>
<div class="a val" style="left:871px;top:279px">0%</div>
<div class="a" style="left:798px;top:303px;width:71px;height:7px;background:#383838;border:1px solid #262626;border-radius:1px"></div>
<div class="a" style="left:791px;top:300px;width:13px;height:13px;border-radius:50%;background:radial-gradient(circle at 50% 40%,#4a4a4a,#3a3a3a);border:1px solid #242424"></div>
<div class="a val" style="left:871px;top:299px">0%</div>
<div class="a" style="left:798px;top:323px;width:71px;height:7px;background:#383838;border:1px solid #262626;border-radius:1px"></div>
<div class="a" style="left:791px;top:320px;width:13px;height:13px;border-radius:50%;background:radial-gradient(circle at 50% 40%,#4a4a4a,#3a3a3a);border:1px solid #242424"></div>
<div class="a val" style="left:871px;top:319px">0px</div>
<div class="a bd" style="left:724px;top:343px;width:188px;height:138px;background:#484848"></div>
<div class="a hdr" style="left:725px;top:344px;width:186px;height:17px"></div>
<div class="a" style="left:725px;top:361px;width:186px;height:1px;background:#1f1f1f"></div>
<svg style="left:0;top:0" width="920" height="560"><path d="M729.5 351.5h7l-3.5 4z" fill="none" stroke="#c8c8c8" stroke-width="1"/></svg>
<div class="a" style="left:791px;top:369px;width:100px;height:16px;background:#333;border:1px solid #262626"></div>
<div class="a" style="left:875px;top:369px;width:16px;height:16px;background:linear-gradient(#444,#383838);border:1px solid #262626"></div>
<svg style="left:0;top:0" width="920" height="560"><path d="M879 376h8l-4 4z" fill="#000"/></svg>
<div class="a val" style="left:795px;top:370px;color:#c8d0d8;letter-spacing:-0.3px">Comic Sans MS</div>
<div class="a" style="left:791px;top:391px;width:49px;height:16px;background:#353535;border:1px solid #262626"></div>
<div class="a" style="left:794px;top:394px;width:42px;height:10px;background:#000"></div>
<div class="a" style="left:791px;top:412px;width:78px;height:18px;background:#262626"></div>
<div class="a abtn" style="left:792px;top:413px"></div><div class="a abtn" style="left:811px;top:413px"></div><div class="a abtn" style="left:830px;top:413px"></div><div class="a abtn" style="left:849px;top:413px"></div>
<svg style="left:0;top:0" width="920" height="560" stroke="#000" stroke-width="1">
 <path d="M795 416.5h12 M795 418.5h8 M795 420.5h12 M795 422.5h9 M795 424.5h12 M795 426.5h9"/>
 <path d="M814 416.5h12 M816 418.5h8 M814 420.5h12 M816 422.5h8 M814 424.5h12 M816 426.5h8"/>
 <path d="M833 416.5h12 M837 418.5h8 M833 420.5h12 M836 422.5h9 M833 424.5h12 M836 426.5h9"/>
 <path d="M853.5 415v13 M855.5 415v10 M857.5 415v13 M859.5 415v10 M861.5 415v13 M863.5 415v10"/>
</svg>
<div class="a" style="left:791px;top:435px;width:78px;height:18px;background:#262626"></div>
<div class="a abtn" style="left:792px;top:436px"></div><div class="a abtn" style="left:811px;top:436px"></div><div class="a abtn" style="left:830px;top:436px"></div><div class="a abtn" style="left:849px;top:436px"></div>
<div class="a sty" style="left:792px;top:438px;font-weight:bold">B</div>
<div class="a sty" style="left:811px;top:438px;font-style:italic">I</div>
<div class="a sty" style="left:830px;top:438px;text-decoration:underline">U</div>
<div class="a sty" style="left:849px;top:438px;text-decoration:line-through">S</div>
<div class="a" style="left:798px;top:462px;width:71px;height:7px;background:#383838;border:1px solid #262626;border-radius:1px"></div>
<div class="a" style="left:791px;top:459px;width:13px;height:13px;border-radius:50%;background:radial-gradient(circle at 50% 40%,#4a4a4a,#3a3a3a);border:1px solid #242424"></div>
<div class="a val" style="left:871px;top:458px">0px</div>
<div class="a bd" style="left:724px;top:483px;width:188px;height:66px;background:#484848"></div>
<div class="a hdr" style="left:725px;top:484px;width:186px;height:17px"></div>
<div class="a" style="left:725px;top:501px;width:186px;height:1px;background:#1f1f1f"></div>
<svg style="left:0;top:0" width="920" height="560"><path d="M729.5 491.5h7l-3.5 4z" fill="none" stroke="#c8c8c8" stroke-width="1"/></svg>
<svg style="left:0;top:0" width="920" height="560"><path d="M891 491h5l-2.5 3z" fill="#bbb"/><path d="M897 489.5h8 M897 491.5h8 M897 493.5h8 M897 495.5h8" stroke="#c8c8c8" stroke-width="1"/></svg>
<div class="a" style="left:725px;top:502px;width:186px;height:21px;background:#5b6677"></div>
<div class="a" style="left:746px;top:502px;width:1px;height:21px;background:#1f1f1f"></div>
<div class="a" style="left:768px;top:502px;width:1px;height:21px;background:#1f1f1f"></div>
<div class="a" style="left:790px;top:502px;width:1px;height:21px;background:#1f1f1f"></div>
<div class="a" style="left:770px;top:503px;width:20px;height:19px;background:#fff;border:1px solid #111"></div>
<div class="a" style="left:725px;top:523px;width:186px;height:1px;background:#1f1f1f"></div>
<div class="a htxt" style="left:816px;top:505px;color:#d4d4d4">1</div>
<svg style="left:0;top:0" width="920" height="560">
 <ellipse cx="735" cy="511.5" rx="7" ry="4.5" fill="none" stroke="#c8c8c8" stroke-width="1"/>
 <ellipse cx="735" cy="511.5" rx="3" ry="2" fill="none" stroke="#c8c8c8" stroke-width="1"/>
 <path d="M906 502h5v5z" fill="#f08a50"/>
</svg>
<!-- cjk text -->
<svg style="left:0;top:0" width="920" height="560" shape-rendering="crispEdges"><path fill="#e4e4e4" d="M35 10h1v1h-1zM32 11h10v1h-10zM34 12h1v1h-1zM38 12h1v1h-1zM34 13h1v1h-1zM38 13h1v1h-1zM34 14h1v1h-1zM38 14h1v1h-1zM35 15h1v1h-1zM37 15h1v1h-1zM35 16h1v1h-1zM37 16h1v1h-1zM36 17h1v1h-1zM34 18h2v1h-2zM37 18h2v1h-2zM32 19h2v1h-2zM39 19h3v1h-3zM45 10h1v1h-1zM49 10h1v1h-1zM45 11h1v1h-1zM47 11h1v1h-1zM49 11h1v1h-1zM44 12h1v1h-1zM47 12h1v1h-1zM49 12h1v1h-1zM44 13h1v1h-1zM46 13h6v1h-6zM44 14h2v1h-2zM49 14h1v1h-1zM43 15h2v1h-2zM49 15h1v1h-1zM44 16h1v1h-1zM46 16h7v1h-7zM44 17h1v1h-1zM49 17h1v1h-1zM44 18h1v1h-1zM49 18h1v1h-1zM44 19h1v1h-1zM49 19h1v1h-1zM86 10h1v1h-1zM90 10h1v1h-1zM86 11h8v1h-8zM85 12h1v1h-1zM87 12h7v1h-7zM84 13h4v1h-4zM86 14h8v1h-8zM85 15h1v1h-1zM87 15h1v1h-1zM89 15h1v1h-1zM91 15h1v1h-1zM93 15h1v1h-1zM84 16h10v1h-10zM87 17h1v1h-1zM89 17h1v1h-1zM91 17h1v1h-1zM93 17h1v1h-1zM86 18h2v1h-2zM89 18h1v1h-1zM91 18h1v1h-1zM93 18h1v1h-1zM84 19h2v1h-2zM87 19h1v1h-1zM92 19h2v1h-2zM97 10h1v1h-1zM100 10h4v1h-4zM95 11h6v1h-6zM103 11h1v1h-1zM96 12h1v1h-1zM100 12h4v1h-4zM95 13h1v1h-1zM97 13h1v1h-1zM100 13h5v1h-5zM95 14h6v1h-6zM103 14h1v1h-1zM97 15h1v1h-1zM100 15h2v1h-2zM103 15h1v1h-1zM97 16h4v1h-4zM102 16h2v1h-2zM95 17h3v1h-3zM100 17h1v1h-1zM103 17h2v1h-2zM97 18h1v1h-1zM99 18h5v1h-5zM97 19h1v1h-1zM103 19h1v1h-1zM137 10h1v1h-1zM141 10h4v1h-4zM138 11h1v1h-1zM141 11h1v1h-1zM144 11h1v1h-1zM136 12h4v1h-4zM141 12h2v1h-2zM144 12h1v1h-1zM139 13h1v1h-1zM141 13h2v1h-2zM144 13h1v1h-1zM138 14h1v1h-1zM141 14h2v1h-2zM144 14h1v1h-1zM137 15h3v1h-3zM141 15h2v1h-2zM144 15h1v1h-1zM136 16h1v1h-1zM138 16h1v1h-1zM141 16h2v1h-2zM144 16h1v1h-1zM138 17h1v1h-1zM142 17h1v1h-1zM145 17h1v1h-1zM138 18h1v1h-1zM141 18h2v1h-2zM145 18h1v1h-1zM138 19h1v1h-1zM140 19h1v1h-1zM143 19h3v1h-3zM148 10h9v1h-9zM148 11h1v1h-1zM151 11h6v1h-6zM148 12h1v1h-1zM150 12h2v1h-2zM154 12h1v1h-1zM156 12h1v1h-1zM148 13h2v1h-2zM152 13h2v1h-2zM156 13h1v1h-1zM148 14h1v1h-1zM151 14h1v1h-1zM154 14h1v1h-1zM156 14h1v1h-1zM148 15h3v1h-3zM152 15h1v1h-1zM155 15h2v1h-2zM148 16h1v1h-1zM153 16h1v1h-1zM156 16h1v1h-1zM148 17h1v1h-1zM152 17h1v1h-1zM156 17h1v1h-1zM148 18h1v1h-1zM153 18h1v1h-1zM156 18h1v1h-1zM148 19h9v1h-9zM190 10h9v1h-9zM190 11h1v1h-1zM193 11h6v1h-6zM190 12h1v1h-1zM192 12h2v1h-2zM196 12h1v1h-1zM198 12h1v1h-1zM190 13h2v1h-2zM194 13h2v1h-2zM198 13h1v1h-1zM190 14h1v1h-1zM193 14h1v1h-1zM196 14h1v1h-1zM198 14h1v1h-1zM190 15h3v1h-3zM194 15h1v1h-1zM197 15h2v1h-2zM190 16h1v1h-1zM195 16h1v1h-1zM198 16h1v1h-1zM190 17h1v1h-1zM194 17h1v1h-1zM198 17h1v1h-1zM190 18h1v1h-1zM195 18h1v1h-1zM198 18h1v1h-1zM190 19h9v1h-9zM201 10h5v1h-5zM209 10h1v1h-1zM202 11h1v1h-1zM204 11h1v1h-1zM207 11h1v1h-1zM202 12h1v1h-1zM204 12h1v1h-1zM209 12h1v1h-1zM200 13h6v1h-6zM208 13h1v1h-1zM202 14h1v1h-1zM204 14h1v1h-1zM207 14h1v1h-1zM202 15h1v1h-1zM204 15h1v1h-1zM206 15h1v1h-1zM202 16h1v1h-1zM204 16h1v1h-1zM209 16h1v1h-1zM202 17h1v1h-1zM204 17h1v1h-1zM208 17h1v1h-1zM201 18h1v1h-1zM204 18h1v1h-1zM207 18h1v1h-1zM200 19h1v1h-1zM204 19h3v1h-3zM243 10h9v1h-9zM243 11h1v1h-1zM246 11h6v1h-6zM243 12h1v1h-1zM245 12h2v1h-2zM249 12h1v1h-1zM251 12h1v1h-1zM243 13h2v1h-2zM247 13h2v1h-2zM251 13h1v1h-1zM243 14h1v1h-1zM246 14h1v1h-1zM249 14h1v1h-1zM251 14h1v1h-1zM243 15h3v1h-3zM247 15h1v1h-1zM250 15h2v1h-2zM243 16h1v1h-1zM248 16h1v1h-1zM251 16h1v1h-1zM243 17h1v1h-1zM247 17h1v1h-1zM251 17h1v1h-1zM243 18h1v1h-1zM248 18h1v1h-1zM251 18h1v1h-1zM243 19h9v1h-9zM255 10h7v1h-7zM255 11h1v1h-1zM261 11h1v1h-1zM255 12h7v1h-7zM255 13h7v1h-7zM255 14h1v1h-1zM255 15h8v1h-8zM255 16h1v1h-1zM258 16h1v1h-1zM255 17h1v1h-1zM257 17h1v1h-1zM260 17h1v1h-1zM254 18h1v1h-1zM256 18h1v1h-1zM261 18h1v1h-1zM253 19h1v1h-1zM256 19h7v1h-7zM298 10h1v1h-1zM296 11h9v1h-9zM296 12h6v1h-6zM303 12h1v1h-1zM298 13h1v1h-1zM301 13h1v1h-1zM304 13h1v1h-1zM295 14h10v1h-10zM297 15h1v1h-1zM300 15h2v1h-2zM296 16h8v1h-8zM297 17h1v1h-1zM300 17h1v1h-1zM303 17h1v1h-1zM297 18h1v1h-1zM300 18h1v1h-1zM302 18h2v1h-2zM300 19h1v1h-1zM312 10h1v1h-1zM307 11h3v1h-3zM312 11h1v1h-1zM307 12h1v1h-1zM309 12h1v1h-1zM311 12h5v1h-5zM307 13h3v1h-3zM312 13h1v1h-1zM315 13h1v1h-1zM307 14h1v1h-1zM309 14h1v1h-1zM312 14h1v1h-1zM315 14h1v1h-1zM307 15h3v1h-3zM312 15h1v1h-1zM315 15h1v1h-1zM307 16h1v1h-1zM309 16h1v1h-1zM312 16h1v1h-1zM315 16h1v1h-1zM307 17h5v1h-5zM315 17h1v1h-1zM306 18h2v1h-2zM311 18h1v1h-1zM313 18h1v1h-1zM315 18h1v1h-1zM310 19h1v1h-1zM314 19h1v1h-1z"/><path fill="#cdcdcd" d="M59 69h8v1h-8zM59 70h7v1h-7zM62 71h1v1h-1zM58 72h10v1h-10zM61 73h1v1h-1zM64 73h1v1h-1zM59 74h7v1h-7zM61 75h1v1h-1zM66 75h1v1h-1zM59 76h8v1h-8zM59 77h1v1h-1zM62 77h1v1h-1zM65 77h1v1h-1zM58 78h1v1h-1zM61 78h2v1h-2zM66 78h2v1h-2zM71 69h1v1h-1zM77 69h1v1h-1zM71 70h1v1h-1zM77 70h1v1h-1zM69 71h4v1h-4zM74 71h5v1h-5zM71 72h1v1h-1zM77 72h1v1h-1zM70 73h2v1h-2zM76 73h2v1h-2zM70 74h3v1h-3zM75 74h1v1h-1zM77 74h1v1h-1zM69 75h1v1h-1zM71 75h1v1h-1zM74 75h1v1h-1zM77 75h1v1h-1zM71 76h1v1h-1zM73 76h1v1h-1zM77 76h1v1h-1zM71 77h1v1h-1zM75 77h1v1h-1zM77 77h1v1h-1zM71 78h1v1h-1zM76 78h1v1h-1zM81 69h1v1h-1zM81 70h8v1h-8zM81 71h5v1h-5zM88 71h1v1h-1zM80 72h2v1h-2zM85 72h1v1h-1zM88 72h1v1h-1zM81 73h1v1h-1zM85 73h1v1h-1zM88 73h1v1h-1zM81 74h5v1h-5zM88 74h1v1h-1zM81 75h1v1h-1zM88 75h1v1h-1zM81 76h1v1h-1zM86 76h2v1h-2zM89 76h1v1h-1zM81 77h1v1h-1zM89 77h1v1h-1zM82 78h8v1h-8zM59 271h8v1h-8zM59 272h7v1h-7zM62 273h1v1h-1zM58 274h10v1h-10zM61 275h1v1h-1zM64 275h1v1h-1zM59 276h7v1h-7zM61 277h1v1h-1zM66 277h1v1h-1zM59 278h8v1h-8zM59 279h1v1h-1zM62 279h1v1h-1zM65 279h1v1h-1zM58 280h1v1h-1zM61 280h2v1h-2zM66 280h2v1h-2zM71 271h1v1h-1zM77 271h1v1h-1zM71 272h1v1h-1zM77 272h1v1h-1zM69 273h4v1h-4zM74 273h5v1h-5zM71 274h1v1h-1zM77 274h1v1h-1zM70 275h2v1h-2zM76 275h2v1h-2zM70 276h3v1h-3zM75 276h1v1h-1zM77 276h1v1h-1zM69 277h1v1h-1zM71 277h1v1h-1zM74 277h1v1h-1zM77 277h1v1h-1zM71 278h1v1h-1zM73 278h1v1h-1zM77 278h1v1h-1zM71 279h1v1h-1zM75 279h1v1h-1zM77 279h1v1h-1zM71 280h1v1h-1zM76 280h1v1h-1zM84 271h6v1h-6zM80 272h4v1h-4zM86 272h1v1h-1zM81 273h1v1h-1zM84 273h6v1h-6zM81 274h1v1h-1zM84 274h1v1h-1zM86 274h1v1h-1zM89 274h1v1h-1zM81 275h1v1h-1zM84 275h1v1h-1zM86 275h1v1h-1zM89 275h1v1h-1zM81 276h1v1h-1zM84 276h1v1h-1zM86 276h1v1h-1zM89 276h1v1h-1zM81 277h4v1h-4zM86 277h1v1h-1zM89 277h1v1h-1zM80 278h1v1h-1zM86 278h2v1h-2zM85 279h1v1h-1zM88 279h1v1h-1zM83 280h2v1h-2zM89 280h1v1h-1zM743 68h1v1h-1zM748 68h1v1h-1zM743 69h1v1h-1zM745 69h7v1h-7zM742 70h3v1h-3zM746 70h5v1h-5zM743 71h1v1h-1zM746 71h1v1h-1zM750 71h1v1h-1zM743 72h1v1h-1zM746 72h3v1h-3zM750 72h1v1h-1zM743 73h1v1h-1zM746 73h1v1h-1zM748 73h3v1h-3zM743 74h2v1h-2zM746 74h1v1h-1zM750 74h1v1h-1zM742 75h2v1h-2zM745 75h7v1h-7zM747 76h1v1h-1zM749 76h1v1h-1zM745 77h2v1h-2zM750 77h2v1h-2zM758 68h1v1h-1zM754 69h9v1h-9zM756 70h1v1h-1zM760 70h1v1h-1zM754 71h8v1h-8zM756 72h1v1h-1zM759 72h1v1h-1zM761 72h1v1h-1zM756 73h1v1h-1zM759 73h1v1h-1zM756 74h1v1h-1zM759 74h1v1h-1zM755 75h1v1h-1zM759 75h1v1h-1zM762 75h1v1h-1zM755 76h1v1h-1zM759 76h1v1h-1zM762 76h1v1h-1zM754 77h1v1h-1zM760 77h3v1h-3zM743 236h9v1h-9zM743 237h1v1h-1zM746 237h6v1h-6zM743 238h1v1h-1zM745 238h2v1h-2zM749 238h1v1h-1zM751 238h1v1h-1zM743 239h2v1h-2zM747 239h2v1h-2zM751 239h1v1h-1zM743 240h1v1h-1zM746 240h1v1h-1zM749 240h1v1h-1zM751 240h1v1h-1zM743 241h3v1h-3zM747 241h1v1h-1zM750 241h2v1h-2zM743 242h1v1h-1zM748 242h1v1h-1zM751 242h1v1h-1zM743 243h1v1h-1zM747 243h1v1h-1zM751 243h1v1h-1zM743 244h1v1h-1zM748 244h1v1h-1zM751 244h1v1h-1zM743 245h9v1h-9zM754 236h5v1h-5zM762 236h1v1h-1zM755 237h1v1h-1zM757 237h1v1h-1zM760 237h1v1h-1zM755 238h1v1h-1zM757 238h1v1h-1zM762 238h1v1h-1zM753 239h6v1h-6zM761 239h1v1h-1zM755 240h1v1h-1zM757 240h1v1h-1zM760 240h1v1h-1zM755 241h1v1h-1zM757 241h1v1h-1zM759 241h1v1h-1zM755 242h1v1h-1zM757 242h1v1h-1zM762 242h1v1h-1zM755 243h1v1h-1zM757 243h1v1h-1zM761 243h1v1h-1zM754 244h1v1h-1zM757 244h1v1h-1zM760 244h1v1h-1zM753 245h1v1h-1zM757 245h3v1h-3zM746 348h1v1h-1zM743 349h9v1h-9zM743 350h1v1h-1zM751 350h1v1h-1zM742 351h1v1h-1zM744 351h5v1h-5zM750 351h1v1h-1zM746 352h1v1h-1zM742 353h10v1h-10zM746 354h1v1h-1zM746 355h1v1h-1zM746 356h1v1h-1zM744 357h3v1h-3zM755 348h1v1h-1zM758 348h1v1h-1zM754 349h1v1h-1zM756 349h6v1h-6zM754 350h1v1h-1zM758 350h1v1h-1zM753 351h2v1h-2zM758 351h2v1h-2zM754 352h1v1h-1zM757 352h2v1h-2zM760 352h1v1h-1zM754 353h1v1h-1zM756 353h1v1h-1zM758 353h1v1h-1zM761 353h1v1h-1zM754 354h2v1h-2zM758 354h1v1h-1zM762 354h1v1h-1zM754 355h1v1h-1zM757 355h4v1h-4zM754 356h1v1h-1zM758 356h1v1h-1zM754 357h1v1h-1zM758 357h1v1h-1zM743 488h9v1h-9zM743 489h1v1h-1zM746 489h6v1h-6zM743 490h1v1h-1zM745 490h2v1h-2zM749 490h1v1h-1zM751 490h1v1h-1zM743 491h2v1h-2zM747 491h2v1h-2zM751 491h1v1h-1zM743 492h1v1h-1zM746 492h1v1h-1zM749 492h1v1h-1zM751 492h1v1h-1zM743 493h3v1h-3zM747 493h1v1h-1zM750 493h2v1h-2zM743 494h1v1h-1zM748 494h1v1h-1zM751 494h1v1h-1zM743 495h1v1h-1zM747 495h1v1h-1zM751 495h1v1h-1zM743 496h1v1h-1zM748 496h1v1h-1zM751 496h1v1h-1zM743 497h9v1h-9zM755 488h7v1h-7zM755 489h1v1h-1zM761 489h1v1h-1zM755 490h7v1h-7zM755 491h7v1h-7zM755 492h1v1h-1zM755 493h8v1h-8zM755 494h1v1h-1zM758 494h1v1h-1zM755 495h1v1h-1zM757 495h1v1h-1zM760 495h1v1h-1zM754 496h1v1h-1zM756 496h1v1h-1zM761 496h1v1h-1zM753 497h1v1h-1zM756 497h7v1h-7z"/><path fill="#c8c8c8" d="M753 260h10v1h-10zM754 261h7v1h-7zM753 262h2v1h-2zM757 262h1v1h-1zM760 262h1v1h-1zM762 262h1v1h-1zM753 263h2v1h-2zM757 263h1v1h-1zM760 263h1v1h-1zM762 263h1v1h-1zM753 264h8v1h-8zM762 264h1v1h-1zM753 265h2v1h-2zM757 265h1v1h-1zM760 265h1v1h-1zM762 265h1v1h-1zM753 266h2v1h-2zM757 266h1v1h-1zM760 266h1v1h-1zM762 266h1v1h-1zM753 267h8v1h-8zM762 267h1v1h-1zM753 268h1v1h-1zM762 268h1v1h-1zM753 269h10v1h-10zM765 260h1v1h-1zM769 260h1v1h-1zM765 261h3v1h-3zM769 261h5v1h-5zM765 262h2v1h-2zM768 262h1v1h-1zM771 262h1v1h-1zM764 263h1v1h-1zM767 263h4v1h-4zM772 263h1v1h-1zM765 264h3v1h-3zM767 265h4v1h-4zM765 266h3v1h-3zM767 267h6v1h-6zM764 268h4v1h-4zM768 269h6v1h-6zM779 262h2v1h-2zM779 263h2v1h-2zM779 267h2v1h-2zM779 268h2v1h-2zM753 281h3v1h-3zM757 281h1v1h-1zM761 281h1v1h-1zM755 282h1v1h-1zM757 282h1v1h-1zM761 282h1v1h-1zM755 283h1v1h-1zM757 283h1v1h-1zM760 283h1v1h-1zM753 284h3v1h-3zM757 284h3v1h-3zM753 285h1v1h-1zM756 285h7v1h-7zM753 286h3v1h-3zM757 286h1v1h-1zM759 286h1v1h-1zM755 287h1v1h-1zM757 287h1v1h-1zM759 287h1v1h-1zM755 288h1v1h-1zM757 288h1v1h-1zM760 288h1v1h-1zM753 289h1v1h-1zM755 289h1v1h-1zM757 289h2v1h-2zM761 289h1v1h-1zM754 290h1v1h-1zM757 290h1v1h-1zM762 290h1v1h-1zM769 281h1v1h-1zM769 282h1v1h-1zM765 283h8v1h-8zM769 284h1v1h-1zM772 284h1v1h-1zM769 285h1v1h-1zM772 285h1v1h-1zM768 286h1v1h-1zM772 286h1v1h-1zM768 287h1v1h-1zM772 287h1v1h-1zM767 288h1v1h-1zM772 288h1v1h-1zM766 289h1v1h-1zM772 289h1v1h-1zM765 290h1v1h-1zM770 290h2v1h-2zM779 283h2v1h-2zM779 284h2v1h-2zM779 288h2v1h-2zM779 289h2v1h-2zM754 301h1v1h-1zM757 301h5v1h-5zM755 302h8v1h-8zM757 303h1v1h-1zM759 303h1v1h-1zM761 303h1v1h-1zM753 304h8v1h-8zM762 304h1v1h-1zM755 305h1v1h-1zM758 305h1v1h-1zM760 305h1v1h-1zM755 306h1v1h-1zM758 306h1v1h-1zM760 306h2v1h-2zM755 307h1v1h-1zM757 307h1v1h-1zM761 307h1v1h-1zM755 308h2v1h-2zM759 308h1v1h-1zM761 308h1v1h-1zM754 309h1v1h-1zM760 309h1v1h-1zM753 310h1v1h-1zM756 310h7v1h-7zM769 301h5v1h-5zM764 302h3v1h-3zM769 302h1v1h-1zM773 302h1v1h-1zM764 303h1v1h-1zM766 303h1v1h-1zM769 303h5v1h-5zM764 304h3v1h-3zM769 304h1v1h-1zM773 304h1v1h-1zM764 305h1v1h-1zM766 305h1v1h-1zM769 305h1v1h-1zM773 305h1v1h-1zM764 306h1v1h-1zM766 306h1v1h-1zM769 306h5v1h-5zM764 307h3v1h-3zM769 307h1v1h-1zM773 307h1v1h-1zM768 308h1v1h-1zM773 308h1v1h-1zM767 309h1v1h-1zM771 309h1v1h-1zM773 309h1v1h-1zM765 310h2v1h-2zM772 310h1v1h-1zM779 303h2v1h-2zM779 304h2v1h-2zM779 308h2v1h-2zM779 309h2v1h-2zM755 321h1v1h-1zM758 321h1v1h-1zM760 321h1v1h-1zM755 322h8v1h-8zM753 323h3v1h-3zM758 323h1v1h-1zM760 323h1v1h-1zM755 324h1v1h-1zM757 324h5v1h-5zM755 325h1v1h-1zM757 325h1v1h-1zM761 325h1v1h-1zM754 326h8v1h-8zM754 327h2v1h-2zM757 327h1v1h-1zM761 327h1v1h-1zM753 328h1v1h-1zM755 328h8v1h-8zM755 329h1v1h-1zM758 329h1v1h-1zM760 329h1v1h-1zM755 330h3v1h-3zM761 330h2v1h-2zM765 321h1v1h-1zM768 321h1v1h-1zM771 321h3v1h-3zM764 322h2v1h-2zM768 322h1v1h-1zM771 322h1v1h-1zM773 322h1v1h-1zM765 323h5v1h-5zM771 323h1v1h-1zM773 323h1v1h-1zM765 324h1v1h-1zM768 324h1v1h-1zM771 324h3v1h-3zM764 325h6v1h-6zM771 325h1v1h-1zM773 325h1v1h-1zM765 326h3v1h-3zM769 326h1v1h-1zM771 326h3v1h-3zM765 327h1v1h-1zM767 327h1v1h-1zM769 327h1v1h-1zM771 327h1v1h-1zM773 327h1v1h-1zM764 328h2v1h-2zM767 328h3v1h-3zM771 328h1v1h-1zM773 328h1v1h-1zM765 329h1v1h-1zM770 329h1v1h-1zM773 329h1v1h-1zM765 330h1v1h-1zM769 330h1v1h-1zM772 330h2v1h-2zM779 323h2v1h-2zM779 324h2v1h-2zM779 328h2v1h-2zM779 329h2v1h-2zM757 373h1v1h-1zM754 374h9v1h-9zM754 375h1v1h-1zM762 375h1v1h-1zM753 376h1v1h-1zM755 376h5v1h-5zM761 376h1v1h-1zM757 377h1v1h-1zM753 378h10v1h-10zM757 379h1v1h-1zM757 380h1v1h-1zM757 381h1v1h-1zM755 382h3v1h-3zM766 373h1v1h-1zM769 373h1v1h-1zM765 374h1v1h-1zM767 374h6v1h-6zM765 375h1v1h-1zM769 375h1v1h-1zM764 376h2v1h-2zM769 376h2v1h-2zM765 377h1v1h-1zM768 377h2v1h-2zM771 377h1v1h-1zM765 378h1v1h-1zM767 378h1v1h-1zM769 378h1v1h-1zM772 378h1v1h-1zM765 379h2v1h-2zM769 379h1v1h-1zM773 379h1v1h-1zM765 380h1v1h-1zM768 380h4v1h-4zM765 381h1v1h-1zM769 381h1v1h-1zM765 382h1v1h-1zM769 382h1v1h-1zM779 375h2v1h-2zM779 376h2v1h-2zM779 380h2v1h-2zM779 381h2v1h-2zM755 394h1v1h-1zM758 394h5v1h-5zM753 395h5v1h-5zM760 395h1v1h-1zM754 396h1v1h-1zM756 396h1v1h-1zM758 396h5v1h-5zM753 397h6v1h-6zM762 397h1v1h-1zM753 398h1v1h-1zM756 398h1v1h-1zM758 398h1v1h-1zM760 398h1v1h-1zM762 398h1v1h-1zM753 399h3v1h-3zM757 399h2v1h-2zM760 399h1v1h-1zM762 399h1v1h-1zM753 400h1v1h-1zM756 400h1v1h-1zM758 400h1v1h-1zM760 400h1v1h-1zM762 400h1v1h-1zM753 401h3v1h-3zM757 401h2v1h-2zM760 401h1v1h-1zM762 401h1v1h-1zM753 402h1v1h-1zM756 402h1v1h-1zM759 402h1v1h-1zM761 402h1v1h-1zM753 403h3v1h-3zM758 403h1v1h-1zM762 403h1v1h-1zM767 394h1v1h-1zM766 395h6v1h-6zM765 396h1v1h-1zM769 396h1v1h-1zM765 397h8v1h-8zM764 398h2v1h-2zM768 398h1v1h-1zM772 398h1v1h-1zM765 399h1v1h-1zM768 399h1v1h-1zM772 399h1v1h-1zM765 400h8v1h-8zM765 401h1v1h-1zM773 401h1v1h-1zM765 402h1v1h-1zM773 402h1v1h-1zM766 403h8v1h-8zM779 396h2v1h-2zM779 397h2v1h-2zM779 401h2v1h-2zM779 402h2v1h-2zM760 415h1v1h-1zM753 416h4v1h-4zM760 416h1v1h-1zM756 417h7v1h-7zM753 418h1v1h-1zM756 418h1v1h-1zM760 418h1v1h-1zM754 419h1v1h-1zM756 419h1v1h-1zM760 419h1v1h-1zM755 420h1v1h-1zM757 420h1v1h-1zM760 420h1v1h-1zM755 421h1v1h-1zM758 421h1v1h-1zM760 421h1v1h-1zM754 422h1v1h-1zM756 422h1v1h-1zM760 422h1v1h-1zM753 423h1v1h-1zM758 423h1v1h-1zM760 423h1v1h-1zM759 424h1v1h-1zM769 415h1v1h-1zM764 416h10v1h-10zM768 417h1v1h-1zM770 417h1v1h-1zM769 418h1v1h-1zM767 419h2v1h-2zM770 419h2v1h-2zM764 420h3v1h-3zM772 420h2v1h-2zM768 421h1v1h-1zM770 421h1v1h-1zM768 422h1v1h-1zM770 422h1v1h-1zM767 423h1v1h-1zM770 423h1v1h-1zM765 424h2v1h-2zM770 424h1v1h-1zM779 417h2v1h-2zM779 418h2v1h-2zM779 422h2v1h-2zM779 423h2v1h-2zM755 438h1v1h-1zM757 438h1v1h-1zM761 438h1v1h-1zM755 439h1v1h-1zM758 439h1v1h-1zM760 439h1v1h-1zM753 440h10v1h-10zM754 441h2v1h-2zM757 441h5v1h-5zM754 442h2v1h-2zM759 442h1v1h-1zM753 443h1v1h-1zM755 443h1v1h-1zM759 443h1v1h-1zM755 444h8v1h-8zM755 445h1v1h-1zM759 445h1v1h-1zM755 446h1v1h-1zM759 446h1v1h-1zM755 447h1v1h-1zM759 447h1v1h-1zM769 438h1v1h-1zM771 438h1v1h-1zM769 439h1v1h-1zM772 439h1v1h-1zM764 440h10v1h-10zM769 441h1v1h-1zM765 442h5v1h-5zM767 443h1v1h-1zM769 443h1v1h-1zM767 444h1v1h-1zM770 444h1v1h-1zM767 445h1v1h-1zM770 445h1v1h-1zM773 445h1v1h-1zM767 446h2v1h-2zM771 446h1v1h-1zM773 446h1v1h-1zM764 447h3v1h-3zM772 447h2v1h-2zM779 440h2v1h-2zM779 441h2v1h-2zM779 445h2v1h-2zM779 446h2v1h-2zM757 460h1v1h-1zM757 461h1v1h-1zM753 462h10v1h-10zM757 463h1v1h-1zM757 464h1v1h-1zM756 465h1v1h-1zM758 465h1v1h-1zM756 466h1v1h-1zM758 466h1v1h-1zM755 467h1v1h-1zM759 467h1v1h-1zM754 468h1v1h-1zM760 468h1v1h-1zM753 469h1v1h-1zM761 469h2v1h-2zM769 460h1v1h-1zM769 461h1v1h-1zM766 462h1v1h-1zM769 462h1v1h-1zM771 462h1v1h-1zM766 463h1v1h-1zM769 463h1v1h-1zM772 463h1v1h-1zM765 464h1v1h-1zM769 464h1v1h-1zM772 464h1v1h-1zM765 465h1v1h-1zM769 465h1v1h-1zM773 465h1v1h-1zM764 466h1v1h-1zM769 466h1v1h-1zM773 466h1v1h-1zM769 467h1v1h-1zM767 468h1v1h-1zM769 468h1v1h-1zM768 469h1v1h-1zM779 462h2v1h-2zM779 463h2v1h-2zM779 467h2v1h-2zM779 468h2v1h-2z"/><path fill="#d4d4d4" d="M795 507h9v1h-9zM795 508h1v1h-1zM798 508h6v1h-6zM795 509h1v1h-1zM797 509h2v1h-2zM801 509h1v1h-1zM803 509h1v1h-1zM795 510h2v1h-2zM799 510h2v1h-2zM803 510h1v1h-1zM795 511h1v1h-1zM798 511h1v1h-1zM801 511h1v1h-1zM803 511h1v1h-1zM795 512h3v1h-3zM799 512h1v1h-1zM802 512h2v1h-2zM795 513h1v1h-1zM800 513h1v1h-1zM803 513h1v1h-1zM795 514h1v1h-1zM799 514h1v1h-1zM803 514h1v1h-1zM795 515h1v1h-1zM800 515h1v1h-1zM803 515h1v1h-1zM795 516h9v1h-9zM807 507h7v1h-7zM807 508h1v1h-1zM813 508h1v1h-1zM807 509h7v1h-7zM807 510h7v1h-7zM807 511h1v1h-1zM807 512h8v1h-8zM807 513h1v1h-1zM810 513h1v1h-1zM807 514h1v1h-1zM809 514h1v1h-1zM812 514h1v1h-1zM806 515h1v1h-1zM808 515h1v1h-1zM813 515h1v1h-1zM805 516h1v1h-1zM808 516h7v1h-7z"/></svg>
</body></html>
